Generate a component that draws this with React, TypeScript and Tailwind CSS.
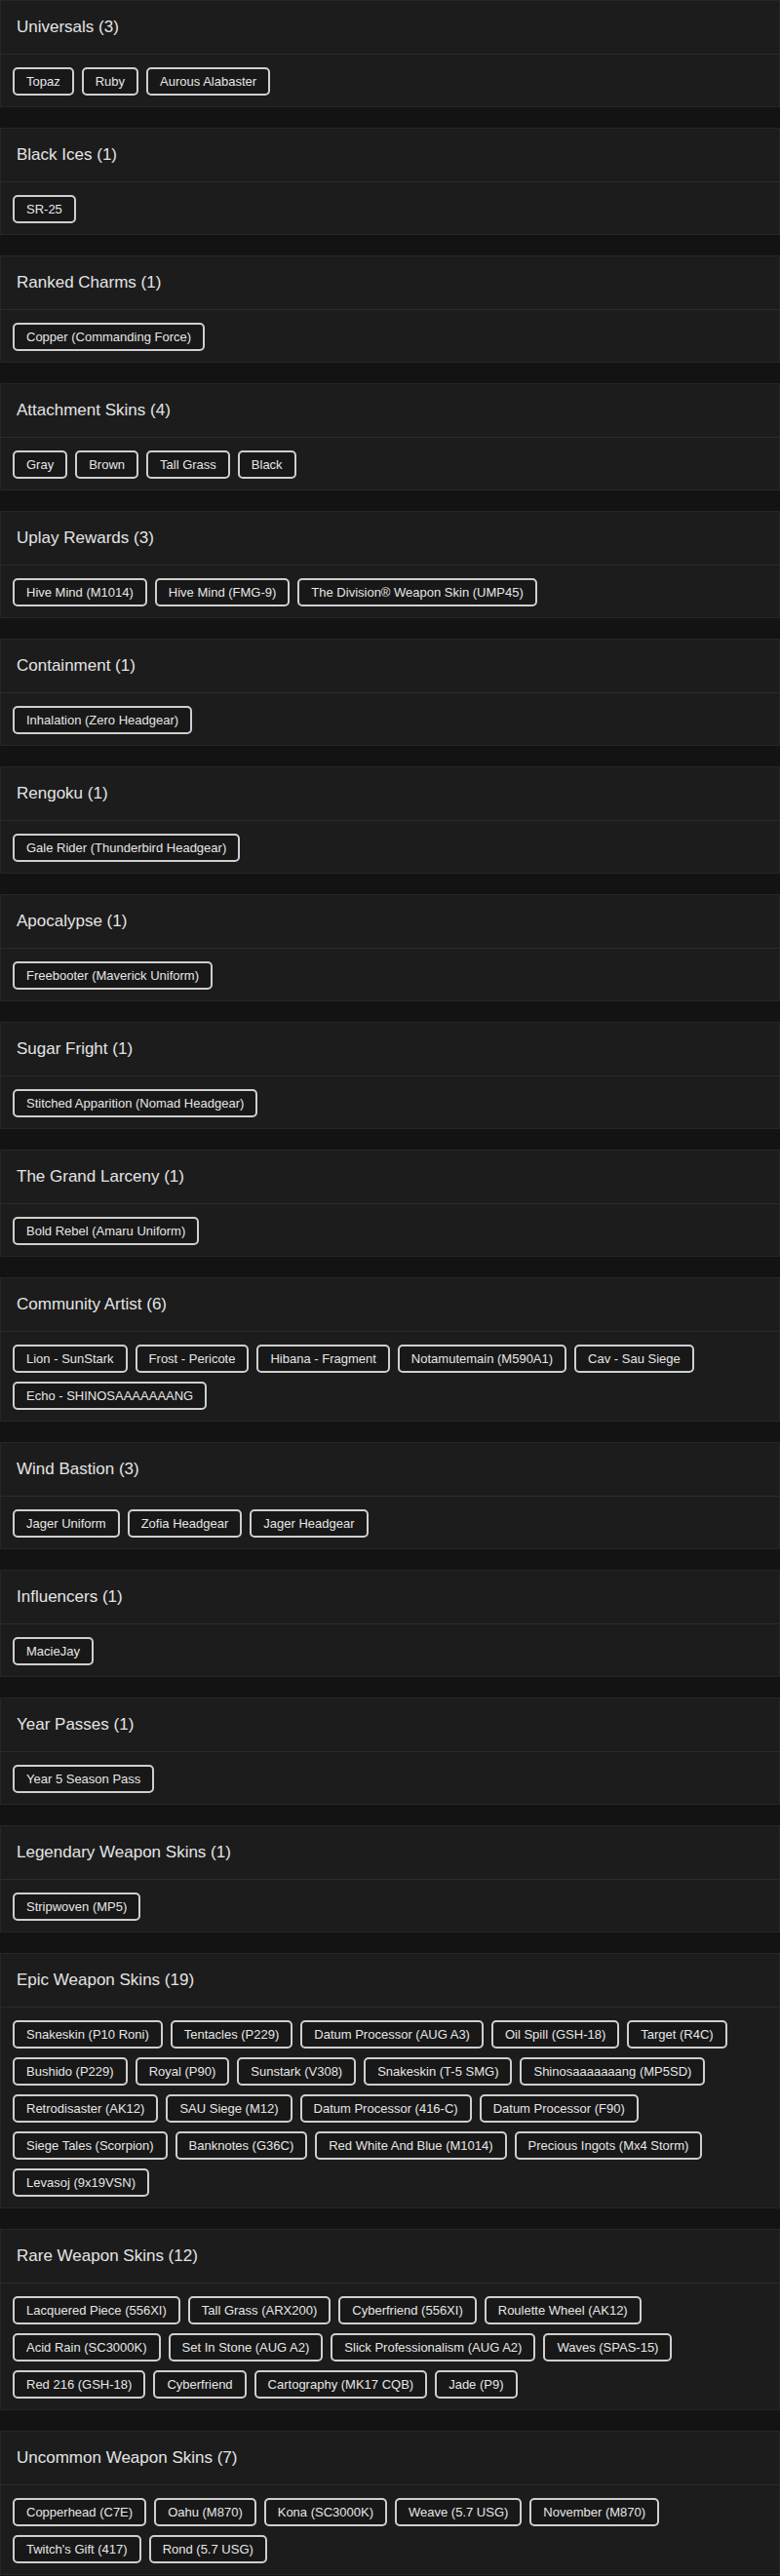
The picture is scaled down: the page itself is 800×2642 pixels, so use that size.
import React from "react";

interface Group {
  title: string;
  items: string[];
}

const groups: Group[] = [
  { title: "Universals", items: ["Topaz", "Ruby", "Aurous Alabaster"] },
  { title: "Black Ices", items: ["SR-25"] },
  { title: "Ranked Charms", items: ["Copper (Commanding Force)"] },
  { title: "Attachment Skins", items: ["Gray", "Brown", "Tall Grass", "Black"] },
  {
    title: "Uplay Rewards",
    items: ["Hive Mind (M1014)", "Hive Mind (FMG-9)", "The Division® Weapon Skin (UMP45)"],
  },
  { title: "Containment", items: ["Inhalation (Zero Headgear)"] },
  { title: "Rengoku", items: ["Gale Rider (Thunderbird Headgear)"] },
  { title: "Apocalypse", items: ["Freebooter (Maverick Uniform)"] },
  { title: "Sugar Fright", items: ["Stitched Apparition (Nomad Headgear)"] },
  { title: "The Grand Larceny", items: ["Bold Rebel (Amaru Uniform)"] },
  {
    title: "Community Artist",
    items: [
      "Lion - SunStark",
      "Frost - Pericote",
      "Hibana - Fragment",
      "Notamutemain (M590A1)",
      "Cav - Sau Siege",
      "Echo - SHINOSAAAAAAANG",
    ],
  },
  { title: "Wind Bastion", items: ["Jager Uniform", "Zofia Headgear", "Jager Headgear"] },
  { title: "Influencers", items: ["MacieJay"] },
  { title: "Year Passes", items: ["Year 5 Season Pass"] },
  { title: "Legendary Weapon Skins", items: ["Stripwoven (MP5)"] },
  {
    title: "Epic Weapon Skins",
    items: [
      "Snakeskin (P10 Roni)",
      "Tentacles (P229)",
      "Datum Processor (AUG A3)",
      "Oil Spill (GSH-18)",
      "Target (R4C)",
      "Bushido (P229)",
      "Royal (P90)",
      "Sunstark (V308)",
      "Snakeskin (T-5 SMG)",
      "Shinosaaaaaaang (MP5SD)",
      "Retrodisaster (AK12)",
      "SAU Siege (M12)",
      "Datum Processor (416-C)",
      "Datum Processor (F90)",
      "Siege Tales (Scorpion)",
      "Banknotes (G36C)",
      "Red White And Blue (M1014)",
      "Precious Ingots (Mx4 Storm)",
      "Levasoj (9x19VSN)",
    ],
  },
  {
    title: "Rare Weapon Skins",
    items: [
      "Lacquered Piece (556XI)",
      "Tall Grass (ARX200)",
      "Cyberfriend (556XI)",
      "Roulette Wheel (AK12)",
      "Acid Rain (SC3000K)",
      "Set In Stone (AUG A2)",
      "Slick Professionalism (AUG A2)",
      "Waves (SPAS-15)",
      "Red 216 (GSH-18)",
      "Cyberfriend",
      "Cartography (MK17 CQB)",
      "Jade (P9)",
    ],
  },
  {
    title: "Uncommon Weapon Skins",
    items: [
      "Copperhead (C7E)",
      "Oahu (M870)",
      "Kona (SC3000K)",
      "Weave (5.7 USG)",
      "November (M870)",
      "Twitch's Gift (417)",
      "Rond (5.7 USG)",
    ],
  },
];

function Chip({ label }: { label: string }) {
  return (
    <span className="flex h-[29px] items-center rounded-[5px] border-2 border-[#cfcfcf] bg-[#181818] px-3 text-[13px] leading-none text-[#e6e6e6]">
      {label}
    </span>
  );
}

function GroupCard({ group }: { group: Group }) {
  return (
    <section className="border border-[#262626] bg-[#1c1c1c]">
      {/* header, 54px + 1px divider */}
      <div className="flex h-[55px] items-center border-b border-[#2c2c2c] px-4">
        <h3 className="text-[17px] font-medium text-[#e4e4e4]">
          {group.title} ({group.items.length})
        </h3>
      </div>
      {/* items */}
      <div className="flex flex-wrap gap-x-2 gap-y-[9px] px-3 pt-[13px] pb-[11px]">
        {group.items.map((item, i) => (
          <Chip key={i} label={item} />
        ))}
      </div>
    </section>
  );
}

export default function App() {
  return (
    <div
      className="flex min-h-screen w-[800px] flex-col gap-[21px] bg-[#131313]"
      style={{ fontFamily: '"Liberation Sans", Arial, sans-serif' }}
    >
      {groups.map((g) => (
        <GroupCard key={g.title} group={g} />
      ))}
    </div>
  );
}
